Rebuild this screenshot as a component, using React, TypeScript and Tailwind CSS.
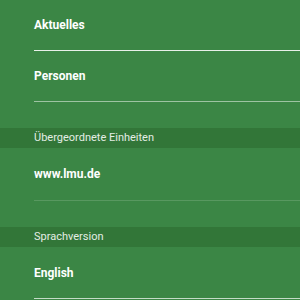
const font = { fontFamily: "Roboto, 'Liberation Sans', sans-serif" };

function Item({ label, h, line }: { label: string; h: string; line: string }) {
  return (
    <div className="pl-[34px]">
      <div className={`${h} flex items-center text-[12px] font-bold text-white ${line}`}>{label}</div>
    </div>
  );
}

function Heading({ label }: { label: string }) {
  return (
    <div className="h-5 bg-[#327638] pl-[34px] flex items-center text-[11px] text-[#e3ede4]">
      {label}
    </div>
  );
}

export default function App() {
  return (
    <div className="w-[300px] h-[300px] overflow-hidden bg-[#3b8645]" style={font}>
      <Item label="Aktuelles" h="h-[51px]" line="border-b border-[#e8f0e9]" />
      <Item label="Personen" h="h-[51px]" line="border-b border-white/50" />
      <div className="h-[26px]" />
      <Heading label="Übergeordnete Einheiten" />
      <Item label="www.lmu.de" h="h-[53px]" line="border-b border-white/15" />
      <div className="h-[26px]" />
      <Heading label="Sprachversion" />
      <Item label="English" h="h-[52px]" line="border-b border-white/70" />
    </div>
  );
}
